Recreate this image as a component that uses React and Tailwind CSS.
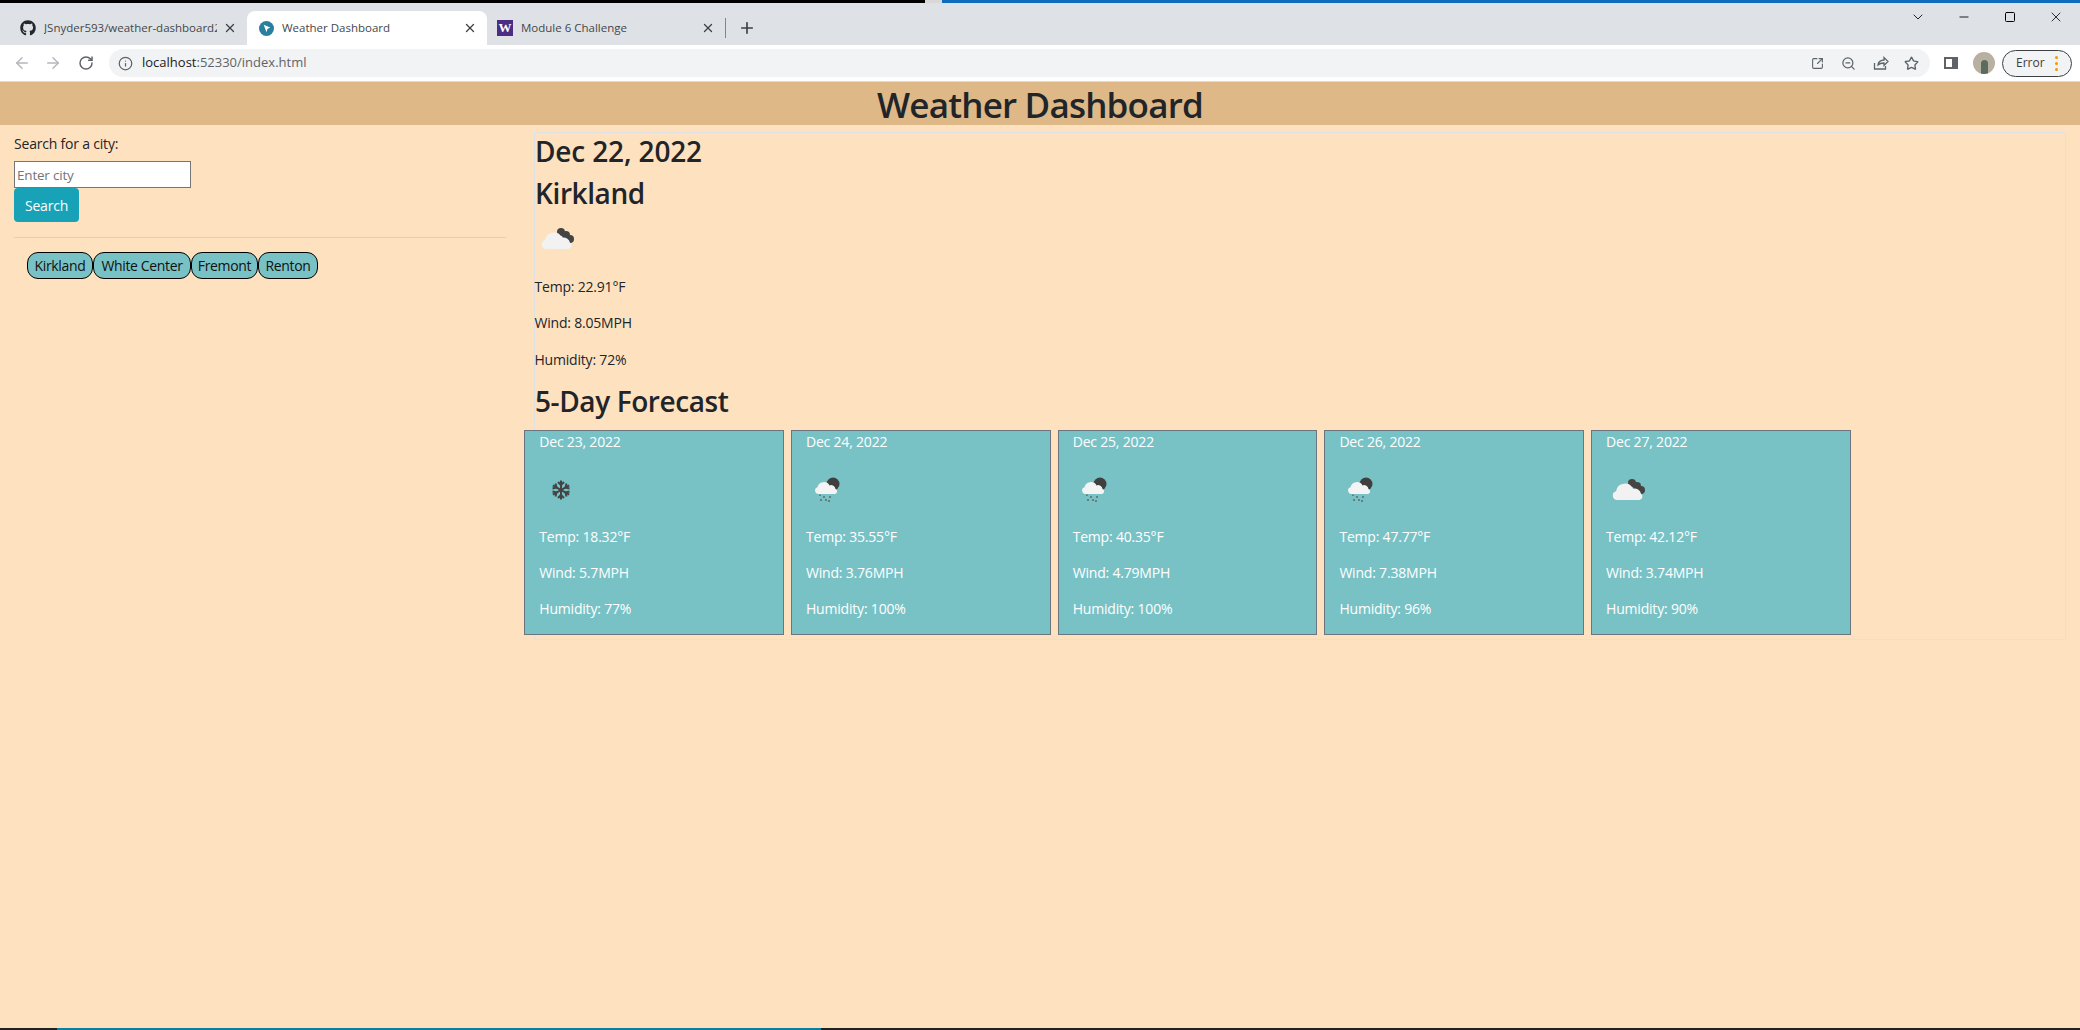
import React from "react";
import { ArrowLeft, ArrowRight, RotateCw, Info, X, Plus, ChevronDown, Minus, Square, SquareArrowOutUpRight, ZoomOut, Star } from "lucide-react";
import { FaGithub } from "react-icons/fa";

const Cloudy = () => (
  <svg viewBox="0 0 50 50" className="w-[50px] h-[50px] block">
    <g fill="#444">
      <circle cx="29" cy="16" r="4" /><circle cx="34" cy="19" r="4" /><circle cx="38" cy="23" r="4" />
    </g>
    <path d="M14 33 a4.5 4.5 0 0 1 -1 -8.8 a9 9 0 0 1 17 -2.5 a6.5 6.5 0 0 1 8 5 a3.5 3.5 0 0 1 -1.5 6.300 z" fill="#f2f2f2" />
  </svg>
);
const Rain = () => (
  <svg viewBox="2 1 50 50" className="w-[50px] h-[50px] block">
    <circle cx="32" cy="18" r="6.500" fill="#3f3f3f" />
    <path d="M17 28 a3.500 3.500 0 0 1 -.5 -6.800 a6.500 6.500 0 0 1 12 -1.800 a4.500 4.500 0 0 1 6 3.500 a2.700 2.700 0 0 1 -.5 5.100 z" fill="#f4f4f4" />
    <g stroke="#555" strokeWidth="1.200">
      <path d="M19 28.500v1.500M23 30v2M29 30v2M20 33v2M25 33v2M28 34v2" />
    </g>
  </svg>
);
const Snow = () => (
  <svg viewBox="0 0 50 50" className="w-[50px] h-[50px] block">
    <g stroke="#444" strokeWidth="2" fill="none">
      <path d="M25 13.500v19M16.800 18.300l16.400 9.400M16.800 27.700l16.400-9.400" />
      <path d="M22 15l3 3 3-3M22 31l3-3 3 3M16.500 21.500l4-1-1-4M33.500 24.500l-4 1 1 4M16.500 24.500l4 1-1 4M33.500 21.500l-4-1 1-4" />
    </g>
  </svg>
);

const days = [
  ["Dec 23, 2022", Snow, "18.32", "5.7", "77"],
  ["Dec 24, 2022", Rain, "35.55", "3.76", "100"],
  ["Dec 25, 2022", Rain, "40.35", "4.79", "100"],
  ["Dec 26, 2022", Rain, "47.77", "7.38", "96"],
  ["Dec 27, 2022", Cloudy, "42.12", "3.74", "90"],
];

const pills = [
  ["Kirkland", "w-[66px]"],
  ["White Center", "w-[98px]"],
  ["Fremont", "w-[67px]"],
  ["Renton", "w-[60px]"],
];

const Tab = ({ cls, icon, title, active }) => (
  <div className={`flex items-center h-[34px] shrink-0 pr-[10px] ${active ? "bg-white rounded-t-[8px]" : ""} ${cls}`}>
    <span className="w-[16px] h-[16px] shrink-0 flex items-center justify-center">{icon}</span>
    <span className="ml-[8px] flex-1 min-w-0 overflow-hidden whitespace-nowrap text-[11.500px] text-[#45474a]">{title}</span>
    <X className="w-[14px] h-[14px] shrink-0 ml-[6px] text-[#3c4043]" strokeWidth={2.200} />
  </div>
);

export default function App() {
  return (
    <div className="h-[1030px] w-[2080px] overflow-hidden flex flex-col bg-[#fee2c0] font-['Open_Sans','Liberation_Sans',sans-serif] text-[#212529]">
      <div className="h-[3px] shrink-0 flex">
        <div className="w-[925px] bg-black" />
        <div className="w-[17px] bg-[#d8d8d8]" />
        <div className="flex-1 bg-[#0f6cbd]" />
      </div>
      <div className="h-[42px] shrink-0 bg-[#dee1e6] flex items-end">
        <Tab cls="w-[247px] pl-[20px]" icon={<FaGithub className="w-[16px] h-[16px] text-[#24292f]" />} title="JSnyder593/weather-dashboard2" />
        <Tab cls="w-[240px] pl-[11px]" active icon={
          <svg viewBox="0 0 16 16" className="w-[15px] h-[15px]"><circle cx="8" cy="8" r="8" fill="#2a7f9e" /><path d="M5 4l7 3-3 1.500-1 3.500z" fill="#fff" /></svg>
        } title="Weather Dashboard" />
        <Tab cls="w-[238px] pl-[10px]" icon={
          <span className="w-[16px] h-[16px] bg-[#4b2e83] text-white text-[13px] leading-[16px] font-bold text-center font-['Liberation_Serif',serif]">W</span>
        } title="Module 6 Challenge" />
        <div className="w-px h-[20px] bg-[#80868b] mb-[7px]" />
        <Plus className="w-[18px] h-[18px] ml-[12px] mb-[8px] text-[#3c4043]" strokeWidth={2.200} />
        <div className="flex-1 self-start flex justify-end items-center h-[28px]">
          <ChevronDown className="w-[16px] h-[16px] mr-[31px] text-[#222]" strokeWidth={1.500} />
          <Minus className="w-[14px] h-[14px] mr-[33px] text-black" strokeWidth={1.500} />
          <Square className="w-[12px] h-[12px] mr-[32px] text-black" strokeWidth={2} absoluteStrokeWidth />
          <X className="w-[16px] h-[16px] mr-[16px] text-[#111]" strokeWidth={1.300} />
        </div>
      </div>
      <div className="h-[37px] shrink-0 bg-white border-b border-[#dadce0] flex items-center">
        <ArrowLeft className="w-[18px] h-[18px] ml-[13px] text-[#b5b7ba]" strokeWidth={2} />
        <ArrowRight className="w-[18px] h-[18px] ml-[13px] text-[#b5b7ba]" strokeWidth={2} />
        <RotateCw className="w-[16px] h-[16px] ml-[16px] text-[#5f6368]" strokeWidth={2.200} />
        <div className="ml-[15px] w-[1821px] h-[28px] rounded-full bg-[#f1f3f4] flex items-center pl-[9px] pr-[11px]">
          <Info className="w-[15px] h-[15px] text-[#5f6368]" strokeWidth={2} />
          <span className="ml-[9px] text-[13px] text-[#202124]">localhost<span className="text-[#5f6368]">:52330/index.html</span></span>
          <div className="flex-1" />
          <SquareArrowOutUpRight className="w-[13px] h-[13px] text-[#5f6368]" strokeWidth={2} />
          <ZoomOut className="w-[15px] h-[15px] ml-[17px] text-[#5f6368]" strokeWidth={2} />
          <svg viewBox="0 0 16 16" className="w-[16px] h-[16px] ml-[17px]" fill="none" stroke="#5f6368" strokeWidth="1.300"><path d="M1.500 8v6h11v-3M5 10c0-3 3-5 6-5V2.500l4 4-4 4V8C9 8 6.500 8.500 5 10z" /></svg>
          <Star className="w-[15px] h-[15px] ml-[15px] text-[#5f6368]" strokeWidth={2.200} />
        </div>
        <div className="ml-[14px] w-[14px] h-[12px] border-[2px] border-r-[6px] border-[#5f6368] box-border bg-white" />
        <div className="ml-[15px] w-[22px] h-[22px] rounded-full bg-[#b8b0a0] overflow-hidden flex justify-center items-end">
          <div className="w-[7px] h-[14px] rounded-t-full bg-[#5c6b5f]" />
        </div>
        <div className="ml-[7px] w-[70px] h-[27px] rounded-full border border-[#3c4043] bg-[#f1f3f4] flex items-center pl-[13px] text-[12px] text-[#3c4043]">
          Error
          <span className="ml-[10px] flex flex-col gap-[3px]">
            <span className="w-[3px] h-[3px] rounded-full bg-[#f29900]" />
            <span className="w-[3px] h-[3px] rounded-full bg-[#f29900]" />
            <span className="w-[3px] h-[3px] rounded-full bg-[#f29900]" />
          </span>
        </div>
      </div>

      <header className="h-[43px] shrink-0 bg-[#deb887] text-center text-[35px] tracking-[-0.8px] leading-[46px] font-semibold">Weather Dashboard</header>

      <div className="flex-1 flex items-start min-h-0">
        <aside className="w-[534px] shrink-0 pl-[14px] pr-[28px] pt-[8px] text-[14px] tracking-[-0.2px]">
          <p className="h-[21px] leading-[21px]">Search for a city:</p>
          <input readOnly placeholder="Enter city" className="block mt-[7px] w-[177px] h-[27px] bg-white border border-[#767676] px-[2px] text-[13.500px] placeholder:text-[#757575] outline-none" />
          <button className="block w-[65px] h-[34px] bg-[#17a2b8] text-white rounded-[4px] text-[14px]">Search</button>
          <hr className="mt-[15px] border-t border-[#e8cfb0]" />
          <div className="flex mt-[14px] ml-[13px]">
            {pills.map(([c, w]) => (
              <span key={c} className={`${w} h-[27px] shrink-0 text-center border border-black rounded-[11px] bg-[#78c2c6] leading-[25px] text-[14px] tracking-[-0.35px] text-[#111]`}>{c}</span>
            ))}
          </div>
        </aside>

        <main className="w-[1532px] mt-[7px] border border-[#dee2e6] pt-[2px] h-[508px] box-border">
          <h3 className="text-[28px] leading-[33.600px] font-semibold mb-[8px] tracking-[-0.15px]">Dec 22, 2022</h3>
          <h3 className="text-[28px] leading-[33.600px] font-semibold mb-[6px] tracking-[-0.4px]">Kirkland</h3>
          <div className="-ml-[3px]"><Cloudy /></div>
          <div className="text-[14px] leading-[21px] mt-[9.500px] tracking-[-0.2px] -ml-[0.500px]">
            <p className="mb-[15.500px]">Temp: 22.91°F</p>
            <p className="mb-[15.500px]">Wind: 8.05MPH</p>
            <p className="mb-[15.500px]">Humidity: 72%</p>
          </div>
          <h3 className="text-[28px] leading-[33.600px] font-semibold tracking-[-0.4px]">5-Day Forecast</h3>
          <div className="flex gap-[7px] -ml-[10.700px] mt-[11px]">
            {days.map(([d, Icon, t, w, h]) => (
              <div key={d} className="w-[259.700px] h-[205px] shrink-0 bg-[#78c2c6] border border-[#6c757d] text-white text-[14px] leading-[21px] tracking-[-0.2px] pl-[14px]">
                <p className="mb-[15px]">{d}</p>
                <div className="-ml-[3px]"><Icon /></div>
                <p className="mt-[9px] mb-[15px]">Temp: {t}°F</p>
                <p className="mb-[15px]">Wind: {w}MPH</p>
                <p>Humidity: {h}%</p>
              </div>
            ))}
          </div>
        </main>
      </div>
      <div className="h-[2px] shrink-0 flex">
        <div className="w-[57px] bg-[#222]" />
        <div className="w-[764px] bg-[#0b7fa0]" />
        <div className="flex-1 bg-[#222]" />
      </div>
    </div>
  );
}
